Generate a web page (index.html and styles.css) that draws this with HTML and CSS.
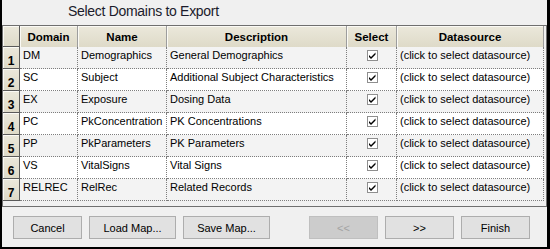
FILE: index.html
```html
<!DOCTYPE html>
<html>
<head>
<meta charset="utf-8">
<link rel="stylesheet" href="styles.css">
</head>
<body>
<div class="window">
  <div class="title">Select Domains to Export</div>
  <div class="grid">
    <table class="domains">
      <colgroup>
        <col class="c-row"><col class="c-domain"><col class="c-name"><col class="c-desc"><col class="c-sel"><col class="c-ds">
      </colgroup>
      <thead>
        <tr><th class="corner"></th><th>Domain</th><th>Name</th><th>Description</th><th>Select</th><th>Datasource</th></tr>
      </thead>
      <tbody>
        <tr class="odd"><th class="rownum">1</th><td>DM</td><td>Demographics</td><td>General Demographics</td><td class="sel"><svg class="check" viewBox="0 0 11 11"><rect x="0.5" y="0.5" width="10" height="10" fill="#fff" stroke="#8f8f8f"/><path d="M2 5 L4 7 L8.5 2.5 L8.5 4.5 L4 9 L2 7 Z" fill="#000"/></svg></td><td>(click to select datasource)</td></tr>
        <tr><th class="rownum">2</th><td>SC</td><td>Subject</td><td>Additional Subject Characteristics</td><td class="sel"><svg class="check" viewBox="0 0 11 11"><rect x="0.5" y="0.5" width="10" height="10" fill="#fff" stroke="#8f8f8f"/><path d="M2 5 L4 7 L8.5 2.5 L8.5 4.5 L4 9 L2 7 Z" fill="#000"/></svg></td><td>(click to select datasource)</td></tr>
        <tr class="odd"><th class="rownum">3</th><td>EX</td><td>Exposure</td><td>Dosing Data</td><td class="sel"><svg class="check" viewBox="0 0 11 11"><rect x="0.5" y="0.5" width="10" height="10" fill="#fff" stroke="#8f8f8f"/><path d="M2 5 L4 7 L8.5 2.5 L8.5 4.5 L4 9 L2 7 Z" fill="#000"/></svg></td><td>(click to select datasource)</td></tr>
        <tr><th class="rownum">4</th><td>PC</td><td>PkConcentration</td><td>PK Concentrations</td><td class="sel"><svg class="check" viewBox="0 0 11 11"><rect x="0.5" y="0.5" width="10" height="10" fill="#fff" stroke="#8f8f8f"/><path d="M2 5 L4 7 L8.5 2.5 L8.5 4.5 L4 9 L2 7 Z" fill="#000"/></svg></td><td>(click to select datasource)</td></tr>
        <tr class="odd"><th class="rownum">5</th><td>PP</td><td>PkParameters</td><td>PK Parameters</td><td class="sel"><svg class="check" viewBox="0 0 11 11"><rect x="0.5" y="0.5" width="10" height="10" fill="#fff" stroke="#8f8f8f"/><path d="M2 5 L4 7 L8.5 2.5 L8.5 4.5 L4 9 L2 7 Z" fill="#000"/></svg></td><td>(click to select datasource)</td></tr>
        <tr><th class="rownum">6</th><td>VS</td><td>VitalSigns</td><td>Vital Signs</td><td class="sel"><svg class="check" viewBox="0 0 11 11"><rect x="0.5" y="0.5" width="10" height="10" fill="#fff" stroke="#8f8f8f"/><path d="M2 5 L4 7 L8.5 2.5 L8.5 4.5 L4 9 L2 7 Z" fill="#000"/></svg></td><td>(click to select datasource)</td></tr>
        <tr class="odd"><th class="rownum">7</th><td>RELREC</td><td>RelRec</td><td>Related Records</td><td class="sel"><svg class="check" viewBox="0 0 11 11"><rect x="0.5" y="0.5" width="10" height="10" fill="#fff" stroke="#8f8f8f"/><path d="M2 5 L4 7 L8.5 2.5 L8.5 4.5 L4 9 L2 7 Z" fill="#000"/></svg></td><td>(click to select datasource)</td></tr>
      </tbody>
    </table>
  </div>
  <div class="buttons">
    <div class="group">
      <button class="btn">Cancel</button>
      <button class="btn wide">Load Map...</button>
      <button class="btn wide">Save Map...</button>
    </div>
    <div class="group">
      <button class="btn" disabled>&lt;&lt;</button>
      <button class="btn">&gt;&gt;</button>
      <button class="btn">Finish</button>
    </div>
  </div>
</div>
</body>
</html>
```
FILE: styles.css
```css
html, body {
  margin: 0;
  padding: 0;
}
body {
  background: #000;
  width: 550px;
  height: 249px;
  overflow: hidden;
  font-family: "Liberation Sans", Arial, sans-serif;
  font-size: 11px;
  color: #000;
}
.window {
  margin: 0 3px 0 2px;
  height: 247px;
  background: #f0f0f0;
  display: flex;
  flex-direction: column;
}
.title {
  height: 25px;
  box-sizing: border-box;
  padding: 3px 0 0 66px;
  font-size: 14px;
  letter-spacing: -0.3px;
  line-height: 16px;
  color: #1b1b2b;
}
.grid {
  height: 182px;
  width: 545px;
  box-sizing: border-box;
  border: 1px solid #6f6f6f;
  background: #f0f0f0;
  overflow: hidden;
}
.domains {
  table-layout: fixed;
  border-collapse: separate;
  border-spacing: 0;
  width: 541px;
}
.c-row { width: 17px; }
.c-domain { width: 58px; }
.c-name { width: 89px; }
.c-desc { width: 180px; }
.c-sel { width: 50px; }
.c-ds { width: 147px; }

.domains thead tr { height: 21px; }
.domains thead th {
  background: linear-gradient(#ebe8db, #dedac8);
  border-right: 1px solid #9d9d9d;
  box-shadow: inset 1px 1px 0 #fbfaf5;
  font-weight: bold;
  font-size: 11.5px;
  text-align: center;
  vertical-align: middle;
  padding: 1px 0 0 0;
  white-space: nowrap;
  overflow: hidden;
}
.domains thead th.corner {
  border-right: 1px solid #5a5a5a;
  border-bottom: 1px solid #5a5a5a;
}
.domains tbody tr { height: 22px; background: #fff; }
.domains tbody tr.odd { background: #f3f3f3; }
.domains td {
  padding: 2px 3px 0 3px;
  line-height: 13px;
  vertical-align: top;
  border-right: 1px dotted #7d7d7d;
  border-bottom: 1px dotted #7d7d7d;
  white-space: nowrap;
  overflow: hidden;
}
.domains th.rownum {
  background: linear-gradient(#ebe8db, #dedac8);
  border-right: 1px solid #5a5a5a;
  border-bottom: 1px solid #5a5a5a;
  box-shadow: inset 1px 1px 0 #fbfaf5;
  font-weight: bold;
  font-size: 12px;
  line-height: 12px;
  text-align: center;
  vertical-align: bottom;
  padding: 0 0 1px 0;
}
.domains td.sel {
  text-align: center;
  padding: 3px 0 0 0;
}
.check {
  display: block;
  width: 11px;
  height: 11px;
  margin: 0 auto;
  position: relative;
  left: 1px;
}
.buttons {
  margin-top: 9px;
  padding: 0 17px 0 11px;
  display: flex;
  justify-content: space-between;
}
.group {
  display: flex;
  gap: 7px;
}
.btn {
  width: 69px;
  height: 23px;
  box-sizing: border-box;
  background: #e1e1e1;
  border: 1px solid #adadad;
  border-radius: 0;
  font-family: "Liberation Sans", Arial, sans-serif;
  font-size: 11px;
  color: #000;
  padding: 0;
  margin: 0;
}
.btn.wide { width: 87px; }
.btn:disabled {
  background: #cccccc;
  border-color: #bfbfbf;
  color: #a3a3a3;
}
```
